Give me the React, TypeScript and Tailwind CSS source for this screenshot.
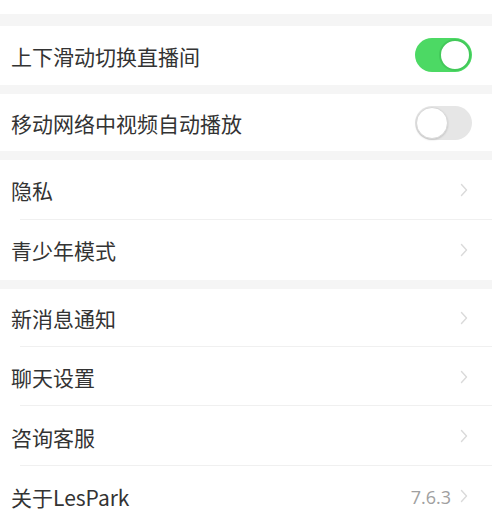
import React from "react";

const font = { fontFamily: '"Noto Sans CJK SC", "Noto Sans", sans-serif' };

function Chevron() {
  return (
    <svg width="8" height="14" viewBox="0 0 8 14" className="block">
      <path d="M1.5 1.5 L6.5 7 L1.5 12.5" fill="none" stroke="#dadada" strokeWidth="1.4" strokeLinecap="round" strokeLinejoin="round" />
    </svg>
  );
}

function Toggle({ on }: { on: boolean }) {
  return on ? (
    <div className="w-[57px] h-[34px] rounded-full bg-[#4cd964] relative">
      <div className="absolute right-[1px] top-[1px] w-[32px] h-[32px] rounded-full bg-white border-[2px] border-[#43c95a]" />
    </div>
  ) : (
    <div className="w-[57px] h-[34px] rounded-full bg-[#e6e6e6] relative">
      <div className="absolute left-[1px] top-[1px] w-[32px] h-[32px] rounded-full bg-white border border-[#d8d8d8] shadow-[0_1px_2px_rgba(0,0,0,0.15)]" />
    </div>
  );
}

function Row({ label, h, right, divider }: { label: string; h: string; right?: React.ReactNode; divider?: boolean }) {
  return (
    <div className={`relative bg-white flex items-center justify-between pl-[11px] pr-[20px] ${h}`}>
      <span className="text-[21px] text-[#333333] leading-none pt-[2px]" style={font}>{label}</span>
      {right}
      {divider && <div className="absolute left-[20px] right-0 bottom-0 h-px bg-[#f0f0f0]" />}
    </div>
  );
}

export default function App() {
  const chev = (
    <div className="pr-[4px]"><Chevron /></div>
  );
  return (
    <div className="w-[496px] h-[527px] bg-white overflow-hidden flex">
      <div className="w-[492px] bg-[#f5f5f5] flex flex-col">
        <div className="h-[14px] bg-white" />
        <div className="h-[12px]" />
        <Row label="上下滑动切换直播间" h="h-[60px]" right={<Toggle on />} />
        <div className="h-[9px]" />
        <Row label="移动网络中视频自动播放" h="h-[58px]" right={<Toggle on={false} />} />
        <div className="h-[9px]" />
        <Row label="隐私" h="h-[60px]" right={chev} divider />
        <Row label="青少年模式" h="h-[61px]" right={chev} />
        <div className="h-[9px]" />
        <Row label="新消息通知" h="h-[59px]" right={chev} divider />
        <Row label="聊天设置" h="h-[60px]" right={chev} divider />
        <Row label="咨询客服" h="h-[60px]" right={chev} divider />
        <Row
          label="关于LesPark"
          h="h-[62px]"
          right={
            <div className="flex items-center gap-[9px]">
              <span className="text-[18px] text-[#a0a0a0] leading-none pt-[2px]" style={{ fontFamily: '"Open Sans", "Noto Sans", sans-serif' }}>7.6.3</span>
              {chev}
            </div>
          }
        />
      </div>
    </div>
  );
}
